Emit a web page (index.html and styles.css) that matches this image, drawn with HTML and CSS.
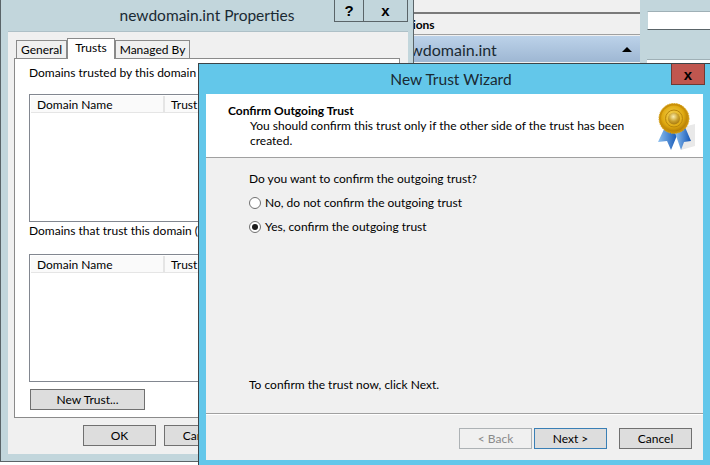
FILE: index.html
```html
<!DOCTYPE html>
<html>
<head>
<title>New Trust Wizard</title>
<link rel="stylesheet" href="styles.css">
</head>
<body>

<div class="actions-pane">
  <div class="actions-title">Actions</div>
  <div class="actions-row">
    <span>newdomain.int</span>
    <span class="collapse-arrow"></span>
  </div>
</div>

<div class="side-strip">
  <div class="side-white"></div>
  <div class="side-gap"></div>
  <div class="side-white-low"></div>
</div>

<div class="window props-window">
  <div class="titlebar">
    <span class="title-text">newdomain.int Properties</span>
    <button class="caption help-caption">?</button>
    <button class="caption close-caption">x</button>
  </div>
  <div class="props-client">
    <div class="tabs">
      <div class="tab">General</div>
      <div class="tab active">Trusts</div>
      <div class="tab">Managed By</div>
    </div>
    <div class="tab-panel">
      <div class="list-label">Domains trusted by this domain (outgoing trusts):</div>
      <div class="list-box">
        <div class="list-header">
          <div class="col col-name">Domain Name</div>
          <div class="col col-trust">Trust Type</div>
        </div>
      </div>
      <div class="list-label second-label">Domains that trust this domain (incoming trusts):</div>
      <div class="list-box">
        <div class="list-header">
          <div class="col col-name">Domain Name</div>
          <div class="col col-trust">Trust Type</div>
        </div>
      </div>
      <button class="btn new-trust">New Trust...</button>
    </div>
    <div class="props-footer">
      <button class="btn">OK</button>
      <button class="btn">Cancel</button>
    </div>
  </div>
</div>

<div class="window wizard">
  <div class="titlebar wizard-titlebar">
    <span class="title-text">New Trust Wizard</span>
    <button class="caption wizard-close">x</button>
  </div>
  <div class="wizard-client">
    <div class="wizard-head">
      <div>
        <div class="wizard-heading">Confirm Outgoing Trust</div>
        <div class="wizard-sub">You should confirm this trust only if the other side of the trust has been created.</div>
      </div>
      <svg class="medal" width="38" height="52" viewBox="0 0 38 52">
        <defs>
          <radialGradient id="gold" cx="45%" cy="40%" r="60%">
            <stop offset="0" stop-color="#f6d65a"/>
            <stop offset="0.7" stop-color="#dfa90f"/>
            <stop offset="1" stop-color="#b57f06"/>
          </radialGradient>
          <radialGradient id="goldCentre" cx="45%" cy="35%" r="65%">
            <stop offset="0" stop-color="#fbeeb0"/>
            <stop offset="0.6" stop-color="#c9a02c"/>
            <stop offset="1" stop-color="#a87a10"/>
          </radialGradient>
          <linearGradient id="ribbon" x1="0" y1="0" x2="1" y2="0">
            <stop offset="0" stop-color="#8dc0f0"/>
            <stop offset="1" stop-color="#1255b5"/>
          </linearGradient>
        </defs>
        <path d="M26 24 L38 21 L38 43 L24 47 Z" fill="#e9e9e9"/>
        <path d="M8 24 L1 39 L10 38 L14 47 L21 30 Z" fill="url(#ribbon)"/>
        <path d="M18 30 L24 47 L27 39 L34 38 L28 24 Z" fill="url(#ribbon)"/>
        <circle cx="17" cy="15.500" r="15" fill="#c98f08" stroke="#d9a61c" stroke-width="1" stroke-dasharray="1.500 1"/>
        <circle cx="17" cy="15.500" r="13" fill="url(#gold)"/>
        <circle cx="17" cy="15.500" r="8.500" fill="none" stroke="#b8860c" stroke-width="1"/>
        <circle cx="17" cy="15.500" r="6" fill="url(#goldCentre)"/>
      </svg>
    </div>
    <div class="wizard-body">
      <div class="question">Do you want to confirm the outgoing trust?</div>
      <label class="radio-row">
        <span class="radio"></span>
        <span>No, do not confirm the outgoing trust</span>
      </label>
      <label class="radio-row">
        <span class="radio checked"></span>
        <span>Yes, confirm the outgoing trust</span>
      </label>
      <div class="next-hint">To confirm the trust now, click Next.</div>
    </div>
    <div class="wizard-footer">
      <button class="btn disabled">&lt; Back</button>
      <button class="btn default">Next &gt;</button>
      <button class="btn cancel">Cancel</button>
    </div>
  </div>
</div>

</body>
</html>
```

FILE: styles.css
```css
body, html {
  height: 100%;
  margin: 0;
  overflow: hidden;
  background: #fff;
  font-family: "Lato", "Open Sans", sans-serif;
  font-size: 12px;
  color: #000;
}

/* windows sit on a free desktop */
.window {
  position: absolute;
  box-sizing: border-box;
  display: flex;
  flex-direction: column;
}

.titlebar {
  position: relative;
  text-align: center;
  flex: none;
}

.title-text {
  font-size: 15.500px;
  color: #1a2a33;
}

.caption {
  position: absolute;
  top: 0;
  box-sizing: border-box;
  margin: 0;
  padding: 0;
  border: 1px solid #5a6468;
  border-top: none;
  background: #c2d6dc;
  font: bold 15px "Liberation Sans", sans-serif;
  color: #000;
  cursor: pointer;
}

/* left window */
.props-window {
  left: 0;
  top: 0;
  width: 414px;
  height: 462px;
  background: #c2d6dc;
  border: 1px solid #5a6468;
  border-top: none;
}

.props-window .titlebar {
  height: 31px;
  line-height: 31px;
}

.help-caption {
  left: 333px;
  width: 30px;
  height: 22px;
}

.close-caption {
  left: 362px;
  width: 45px;
  height: 22px;
}

.props-client {
  flex: 1;
  margin: 0 5px 7px 7px;
  background: #f0f0f0;
  border-top: 1px solid #aec0c7;
  display: flex;
  flex-direction: column;
}

.tabs {
  display: flex;
  align-items: flex-end;
  margin: 6px 0 -1px 8px;
  height: 21px;
  position: relative;
  z-index: 1;
}

.tab {
  box-sizing: border-box;
  height: 18px;
  line-height: 17px;
  padding: 0 4px;
  border: 1px solid #8a8a8a;
  border-bottom: none;
  background: #f0f0f0;
  margin-bottom: 1px;
  white-space: nowrap;
}

.tab.active {
  height: 21px;
  background: #fff;
  line-height: 17px;
  margin: 0;
  padding: 0 7px;
}

.tab-panel {
  box-sizing: border-box;
  margin-left: 6px;
  width: 386px;
  height: 360px;
  background: #fff;
  border: 1px solid #8a8a8a;
  padding: 6px 14px 0;
}

.list-label {
  height: 15px;
  line-height: 15px;
  white-space: nowrap;
  overflow: hidden;
}

.second-label {
  margin-top: 1px;
}

.list-box {
  box-sizing: border-box;
  margin-top: 14px;
  height: 128px;
  border: 1px solid #828790;
  padding: 1px;
}

.second-label + .list-box {
  margin-top: 16px;
}

.list-header {
  display: flex;
  height: 16px;
  background: #fafafa;
  border-bottom: 1px solid #e5e5e5;
}

.col {
  box-sizing: border-box;
  line-height: 17px;
  padding-left: 6px;
  white-space: nowrap;
}

.col-name {
  width: 134px;
  border-right: 2px solid #e5e5e5;
}

.btn {
  box-sizing: border-box;
  width: 73px;
  height: 21px;
  padding: 0;
  margin: 0;
  border: 1px solid #707070;
  background: #dddddd;
  font: inherit;
  color: #000;
  cursor: pointer;
}

.new-trust {
  display: block;
  width: 115px;
  margin: 7px 0 0 1px;
}

.props-footer {
  display: flex;
  gap: 8px;
  margin: 7px 0 0 75px;
}

/* bits of the console behind the dialogs, running under the left window */
.actions-pane {
  position: absolute;
  left: 390px;
  top: 0;
  width: 250px;
  height: 63px;
  box-sizing: border-box;
  background: #f0f0f0;
  padding-top: 12px;
}

.actions-title {
  box-sizing: border-box;
  height: 23px;
  line-height: 22px;
  border-top: 2px solid #7a7a7a;
  border-bottom: 1px solid #a0a0a0;
  padding-left: 4px;
  font-weight: 700;
  white-space: nowrap;
}

.actions-row {
  display: flex;
  justify-content: space-between;
  align-items: center;
  box-sizing: border-box;
  height: 26px;
  margin-top: 1px;
  padding: 0 8px 0 3px;
  background: linear-gradient(#bcd2e9, #9eb7d3);
  font-size: 16px;
  white-space: nowrap;
}

.actions-row span:first-child {
  color: #1a2a33;
}

.collapse-arrow {
  width: 0;
  height: 0;
  border-left: 5px solid transparent;
  border-right: 5px solid transparent;
  border-bottom: 5px solid #000;
}

.side-strip {
  position: absolute;
  left: 640px;
  top: 0;
  width: 70px;
  height: 63px;
  box-sizing: border-box;
  background: #c2d6dc;
  padding: 11px 0 0 7px;
}

.side-white {
  height: 17px;
  background: #fff;
  border-top: 1px solid #9fb0b6;
  border-left: 1px solid #c2d6dc;
  border-bottom: 1px solid #5a6468;
}

.side-gap {
  height: 29px;
}

.side-white-low {
  height: 5px;
  background: #fff;
  border-top: 1px solid #9fb0b6;
}

/* wizard */
.wizard {
  left: 198px;
  top: 63px;
  width: 512px;
  height: 402px;
  background: #63c7ea;
  border-left: 1px solid #3c4448;
  border-top: 1px solid #3c4448;
}

.wizard-titlebar {
  height: 30px;
  line-height: 30px;
  margin-right: 7px;
}

.wizard-close {
  left: 472px;
  width: 34px;
  height: 21px;
  background: #c0564f;
  border-color: #6e3a36;
}

.wizard-client {
  margin: 0 7px;
  height: 366px;
  background: #f0f0f0;
  display: flex;
  flex-direction: column;
}

.wizard-head {
  display: flex;
  justify-content: space-between;
  box-sizing: border-box;
  height: 64px;
  background: #fff;
  border-bottom: 1px solid #a0a0a0;
  padding: 9px 8px 0 22px;
}

.wizard-heading {
  font-weight: 700;
  line-height: 15px;
}

.wizard-sub {
  margin-left: 22px;
  line-height: 15px;
}

.medal {
  flex: none;
}

.wizard-body {
  flex: 1;
  padding: 13px 0 0 43px;
  display: flex;
  flex-direction: column;
}

.question {
  line-height: 15px;
}

.radio-row {
  display: flex;
  align-items: center;
  gap: 4px;
  height: 15px;
  margin-top: 9px;
  line-height: 15px;
}

.radio {
  box-sizing: border-box;
  width: 12px;
  height: 12px;
  border: 1px solid #707070;
  border-radius: 50%;
  background: #fff;
  display: flex;
  align-items: center;
  justify-content: center;
}

.radio.checked::before {
  content: "";
  width: 6px;
  height: 6px;
  border-radius: 50%;
  background: #1a1a1a;
}

.next-hint {
  margin-top: auto;
  margin-bottom: 21px;
  line-height: 15px;
}

.wizard-footer {
  display: flex;
  flex: none;
  height: 47px;
  box-sizing: border-box;
  border-top: 1px solid #a0a0a0;
  box-shadow: inset 0 1px 0 #fff;
  padding: 14px 0 0 253px;
  gap: 2px;
}

.btn.disabled {
  background: #f0f0f0;
  border-color: #adb2b5;
  color: #8a8a8a;
  cursor: default;
}

.btn.default {
  border-color: #3a7fb5;
}

.btn.cancel {
  margin-left: 10px;
}
```
